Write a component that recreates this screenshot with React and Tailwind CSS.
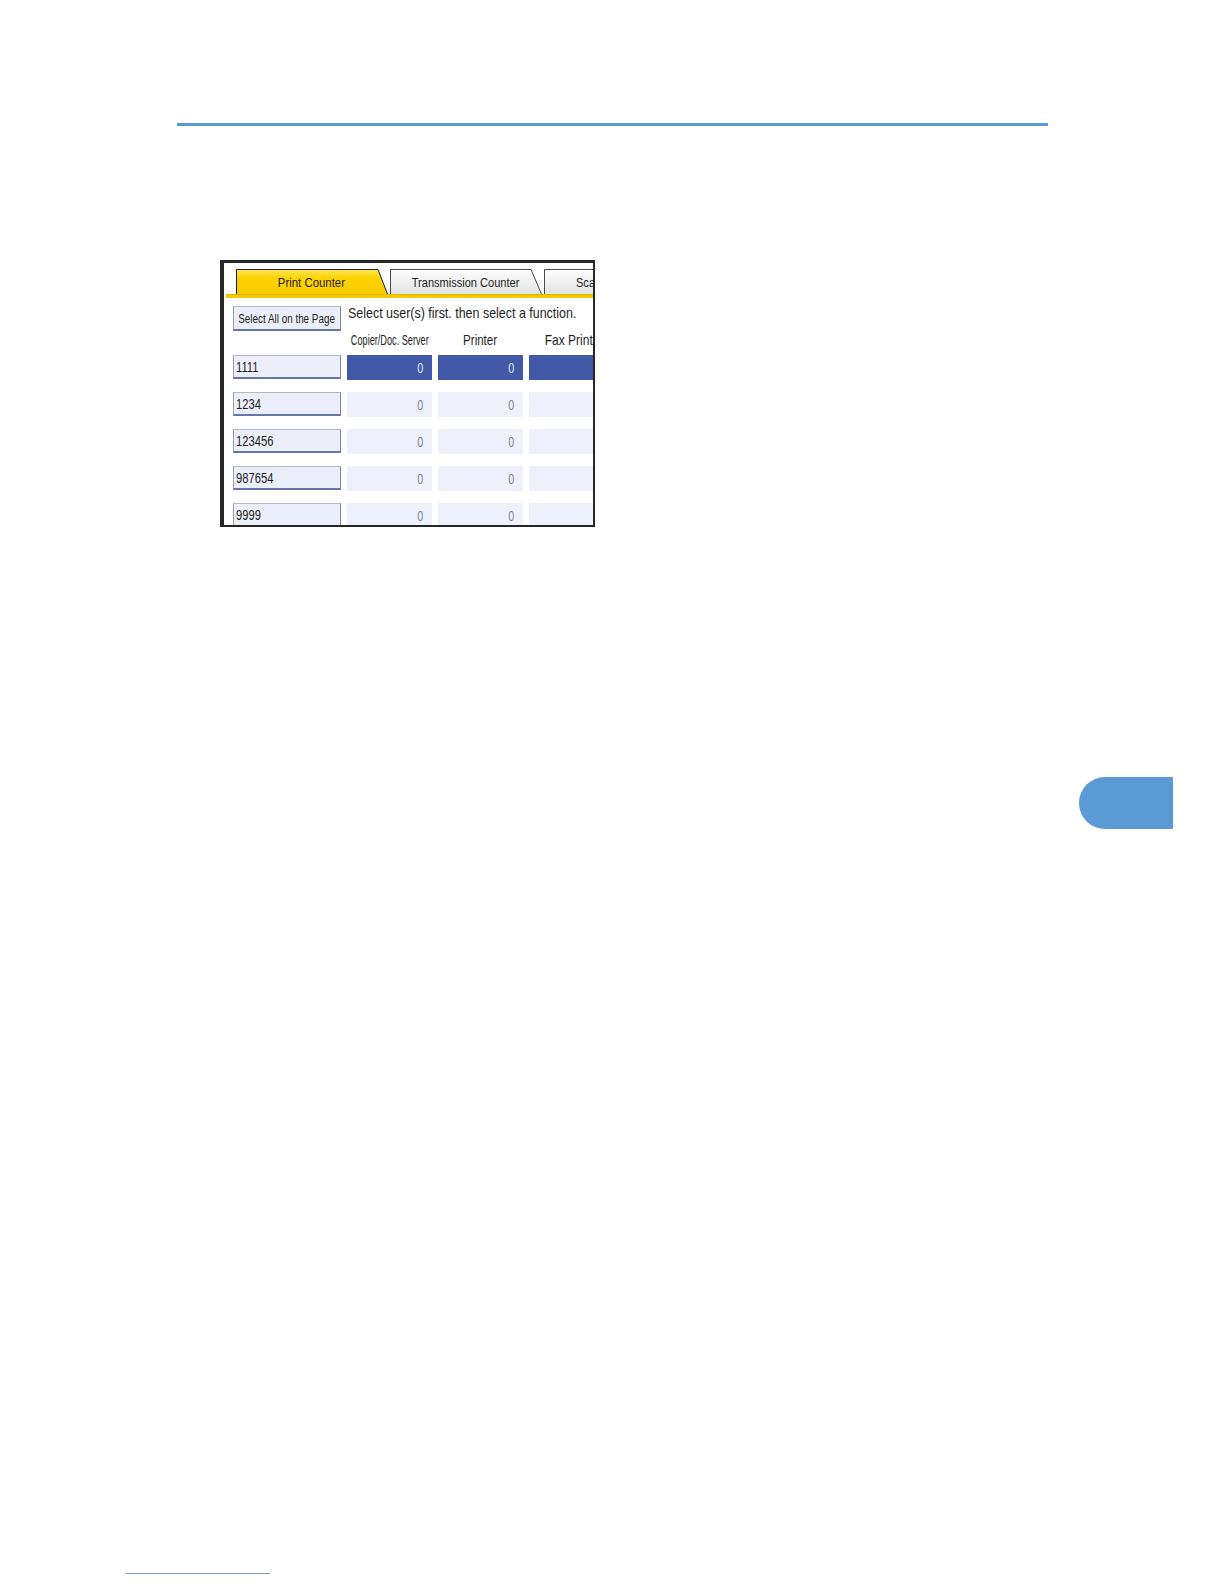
export default function App() {
  const users = ["1111", "1234", "123456", "987654", "9999"];
  return (
    <div className="relative w-[1224px] h-[1584px] bg-white overflow-hidden flex flex-col font-['Liberation_Sans',Arial,sans-serif] text-[#1e1e1e]">
      <div className="mt-[123px] ml-[177px] w-[871px] h-[3px] bg-[#5b9bd1]" />

      <div className="mt-[134px] ml-[220px] w-[375px] h-[267px] shrink-0 border-t-[3px] border-l-4 border-r-2 border-b-2 border-[#262626] bg-white overflow-hidden flex flex-col">
        {/* tab strip */}
        <div className="pt-[6px] flex overflow-hidden shrink-0">
          <div className="relative ml-[12px] w-[152px] h-[25px] shrink-0 flex items-center justify-center pt-[3px]">
            <svg className="absolute inset-0" width="152" height="25" viewBox="0 0 152 25">
              <defs>
                <linearGradient id="gy" x1="0" y1="0" x2="0" y2="1">
                  <stop offset="0" stopColor="#ffe45a" />
                  <stop offset="0.35" stopColor="#fcd300" />
                  <stop offset="1" stopColor="#f8cc00" />
                </linearGradient>
              </defs>
              <polygon points="0.5,25 0.5,0.5 142,0.5 151.5,25" fill="url(#gy)" />
              <polyline points="0.5,25 0.5,0.5 142,0.5 151.5,25" fill="none" stroke="#1e1e1e" strokeWidth="1" />
            </svg>
            <span className="relative inline-block whitespace-nowrap text-[12px] leading-none scale-x-[0.95] origin-center pr-[2px]">Print Counter</span>
          </div>
          <div className="relative ml-[2px] w-[152px] h-[25px] shrink-0 flex items-center justify-center pt-[3px]">
            <svg className="absolute inset-0" width="152" height="25" viewBox="0 0 152 25">
              <defs>
                <linearGradient id="gg" x1="0" y1="0" x2="0" y2="1">
                  <stop offset="0" stopColor="#ffffff" />
                  <stop offset="1" stopColor="#e2e2e2" />
                </linearGradient>
              </defs>
              <polygon points="0.5,25 0.5,0.5 141,0.5 151.5,25" fill="url(#gg)" />
              <polyline points="0.5,25 0.5,0.5 141,0.5 151.5,25" fill="none" stroke="#4a4a4a" strokeWidth="1" />
            </svg>
            <span className="relative inline-block whitespace-nowrap text-[12px] leading-none scale-x-[0.92] origin-center pr-[2px]">Transmission Counter</span>
          </div>
          <div className="relative ml-[2px] w-[120px] h-[25px] shrink-0 flex items-center pl-[32px] pt-[3px]">
            <svg className="absolute inset-0" width="120" height="25" viewBox="0 0 120 25">
              <polygon points="0.5,25 0.5,0.5 110,0.5 119.5,25" fill="url(#gg)" />
              <polyline points="0.5,25 0.5,0.5 110,0.5 119.5,25" fill="none" stroke="#4a4a4a" strokeWidth="1" />
            </svg>
            <span className="relative inline-block whitespace-nowrap text-[12px] leading-none scale-x-[0.92] origin-left">Scanner Counter</span>
          </div>
        </div>
        <div className="h-[4px] ml-[2px] shrink-0 bg-[#f4c900] border-t border-[#e2b800]" />

        {/* content */}
        <div className="pl-[9px] pt-[8px] flex flex-col">
          <div className="flex items-start">
            <div className="w-[108px] h-[25px] shrink-0 flex items-center justify-center bg-[#eceff9] border border-t-[#b2b7ca] border-l-[#9aa0b4] border-r-[#7c87ad] border-b-2 border-b-[#6676a8]">
              <span className="inline-block whitespace-nowrap text-[13px] leading-none scale-x-[0.76] origin-center">Select All on the Page</span>
            </div>
            <div className="ml-[7px] -mt-[1px] h-[15px] flex items-center">
              <span className="inline-block whitespace-nowrap text-[15px] leading-[15px] scale-x-[0.83] origin-left">Select user(s) first. then select a function.</span>
            </div>
          </div>

          <div className="-mt-[1px] h-[20px] flex gap-[6px]">
            <div className="w-[108px] shrink-0" />
            <div className="w-[85px] shrink-0 flex items-center justify-center">
              <span className="inline-block whitespace-nowrap text-[15px] leading-[20px] scale-x-[0.61] origin-center">Copier/Doc. Server</span>
            </div>
            <div className="w-[85px] shrink-0 flex items-center justify-center">
              <span className="inline-block whitespace-nowrap text-[15px] leading-[20px] scale-x-[0.77] origin-center">Printer</span>
            </div>
            <div className="w-[85px] shrink-0 flex items-center justify-center">
              <span className="inline-block whitespace-nowrap text-[15px] leading-[20px] scale-x-[0.8] origin-center">Fax Prints</span>
            </div>
          </div>

          <div className="mt-[5px] flex flex-col gap-[12px]">
            {users.map((u, i) => {
              const sel = i === 0;
              return (
                <div key={u} className="flex gap-[6px] h-[25px] shrink-0">
                  <div className="w-[108px] h-[24px] shrink-0 flex items-center pl-[2px] bg-[#eceff9] border border-t-[#b2b7ca] border-l-[#9aa0b4] border-r-[#7c87ad] border-b-2 border-b-[#6676a8]">
                    <span className="inline-block whitespace-nowrap text-[14px] leading-none scale-x-[0.8] origin-left">{u}</span>
                  </div>
                  {[0, 1, 2].map((c) => (
                    <div
                      key={c}
                      className={
                        sel
                          ? "w-[85px] h-[25px] shrink-0 flex items-center justify-end pr-[9px] bg-[#4259a8] text-[#dfe4f4]"
                          : "w-[85px] h-[25px] shrink-0 flex items-center justify-end pr-[9px] bg-[#eef1fb] text-[#7e8596]"
                      }
                    >
                      {c < 2 ? (
                        <span className="inline-block whitespace-nowrap text-[15px] leading-none scale-x-[0.72] origin-right">0</span>
                      ) : null}
                    </div>
                  ))}
                </div>
              );
            })}
          </div>
        </div>
      </div>

      <div className="mt-auto mb-[10px] ml-[126px] w-[144px] h-px bg-[#7f9ad8]" />

      <div className="absolute left-[1079px] top-[777px] w-[94px] h-[52px] rounded-l-full bg-[#5b9bd5]" />
    </div>
  );
}
